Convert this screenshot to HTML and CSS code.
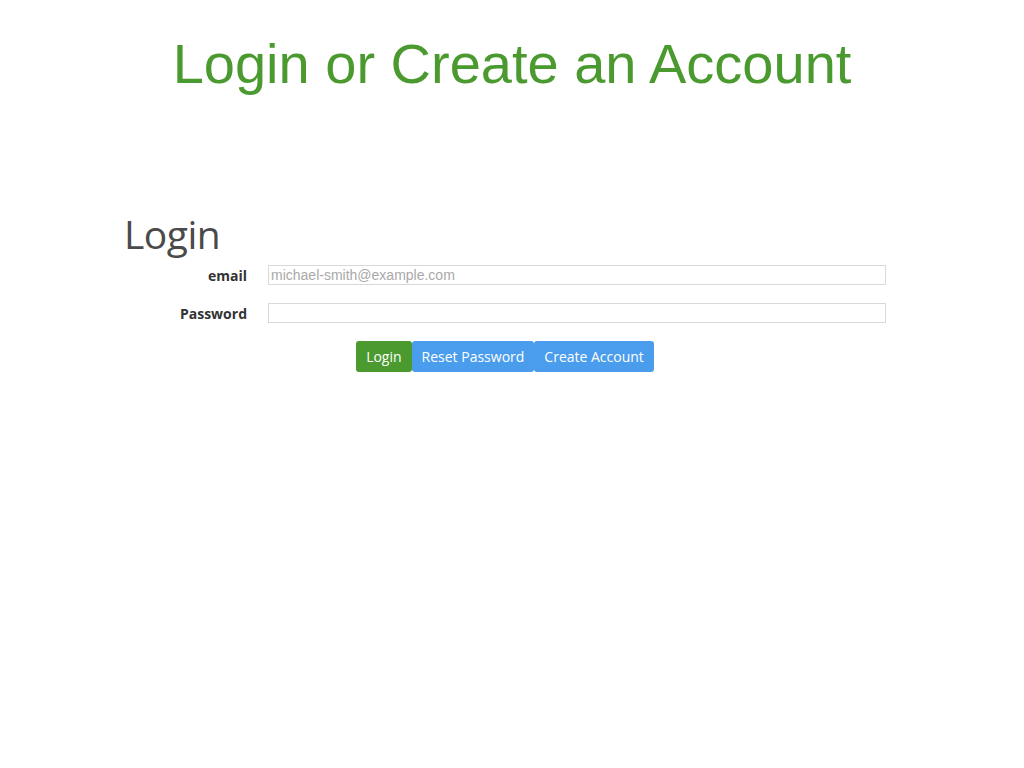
FILE: index.html
```html
<!DOCTYPE html>
<html lang="en">

<head>
    <meta charset="UTF-8">
    <meta name="viewport" content="width=device-width, initial-scale=1.0">
    <title>Login or Create an Account</title>
    <link rel="stylesheet" href="styles.css">
</head>

<body>
    <h1 class="page-title">Login or Create an Account</h1>

    <main class="login-panel">
        <h2 class="login-heading">Login</h2>

        <form class="login-form">
            <div class="form-row">
                <label class="form-label" for="email">email</label>
                <input class="form-input" id="email" type="text" placeholder="michael-smith@example.com">
            </div>

            <div class="form-row">
                <label class="form-label" for="password">Password</label>
                <input class="form-input" id="password" type="password">
            </div>

            <div class="form-actions">
                <button type="button" class="btn btn-login">Login</button>
                <button type="button" class="btn btn-blue">Reset Password</button>
                <button type="button" class="btn btn-blue">Create Account</button>
            </div>
        </form>
    </main>
</body>

</html>
```

FILE: styles.css
```css
* {
    margin: 0;
    padding: 0;
    box-sizing: border-box;
}

body {
    font-family: "Liberation Sans", Arial, sans-serif;
    background: #ffffff;
    color: #333333;
}

.page-title {
    font-size: 56px;
    font-weight: 400;
    color: #4b9a2f;
    text-align: center;
    line-height: 1;
    padding-top: 36px;
}

.login-panel {
    width: 762px;
    margin: 122px 0 0 124px;
}

.login-heading {
    font-family: "Open Sans", "Liberation Sans", sans-serif;
    font-size: 39px;
    font-weight: 400;
    color: #4a4a4a;
    line-height: 1;
    letter-spacing: -0.5px;
}

.login-form {
    margin-top: 12px;
}

.form-row {
    display: flex;
    align-items: center;
    gap: 21px;
    margin-bottom: 18px;
}

.form-label {
    width: 123px;
    text-align: right;
    font-family: "Open Sans", "Liberation Sans", sans-serif;
    font-size: 14px;
    font-weight: 700;
    color: #333333;
}

.form-input {
    flex: 1;
    height: 20px;
    border: 1px solid #d9d9d9;
    padding: 0 2px;
    font-family: "Liberation Sans", Arial, sans-serif;
    font-size: 14px;
    color: #333333;
    outline: none;
}

.form-input::placeholder {
    color: #a9a9a9;
}

.form-actions {
    display: flex;
    justify-content: center;
}

.btn {
    height: 31px;
    border: none;
    border-radius: 3px;
    padding: 0 10px;
    font-family: "Open Sans", "Liberation Sans", sans-serif;
    font-size: 14px;
    color: #ffffff;
    cursor: pointer;
}

.btn-login {
    background: #4b9a2f;
}

.btn-blue {
    background: #4a9ded;
}
```
